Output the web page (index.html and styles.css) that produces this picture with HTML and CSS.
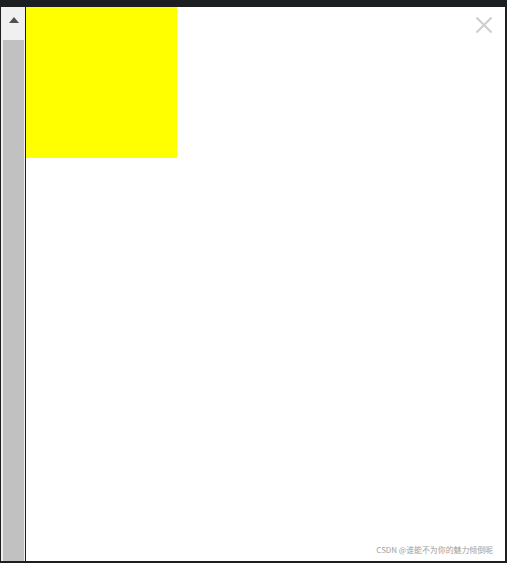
FILE: index.html
```html
<!DOCTYPE html>
<html lang="zh">
<head>
<meta charset="utf-8">
<title>Popup</title>
<link rel="stylesheet" href="styles.css">
</head>
<body>
<div class="frame">
  <div class="scrollbar">
    <div class="arrow-btn"><span class="arrow-up"></span></div>
    <div class="thumb"></div>
  </div>
  <div class="divider"></div>
  <div class="content">
    <div class="yellow-box"></div>
    <button class="close" aria-label="关闭">
      <svg width="18" height="18" viewBox="0 0 18 18"><path d="M1.5 1.5 L16.5 16.5 M16.5 1.5 L1.5 16.5" stroke="#cfcfcf" stroke-width="2.2" fill="none"/></svg>
    </button>
    <div class="watermark">CSDN @谁能不为你的魅力倾倒呢</div>
  </div>
</div>
</body>
</html>
```
FILE: styles.css
```css
html, body {
  margin: 0;
  padding: 0;
  background: #ffffff;
}
.frame {
  box-sizing: border-box;
  width: 507px;
  height: 563px;
  border-style: solid;
  border-color: #1c1f22;
  border-width: 7px 2px 2px 1px;
  display: flex;
  background: #ffffff;
}
.scrollbar {
  width: 24px;
  background: #f0f0f0;
  display: flex;
  flex-direction: column;
  padding: 0 1px 0 2px;
  box-sizing: border-box;
}
.arrow-btn {
  height: 33px;
  display: flex;
  justify-content: center;
  padding-top: 10px;
  box-sizing: border-box;
}
.arrow-up {
  width: 0;
  height: 0;
  border-left: 5.5px solid transparent;
  border-right: 5.5px solid transparent;
  border-bottom: 6px solid #505050;
}
.thumb {
  flex: 1;
  background: #c1c1c1;
}
.divider {
  width: 1px;
  background: #1c1f22;
}
.content {
  flex: 1;
  position: relative;
  background: #ffffff;
}
.yellow-box {
  width: 151px;
  height: 151px;
  background: #ffff00;
}
.close {
  position: absolute;
  top: 9px;
  right: 12px;
  width: 18px;
  height: 18px;
  padding: 0;
  border: 0;
  background: transparent;
  display: flex;
}
.watermark {
  position: absolute;
  right: 12px;
  bottom: 6px;
  font-family: "Noto Sans CJK SC", "Noto Sans", sans-serif;
  font-size: 7.9px;
  line-height: 10px;
  color: #a0a0a0;
  white-space: nowrap;
}
```
